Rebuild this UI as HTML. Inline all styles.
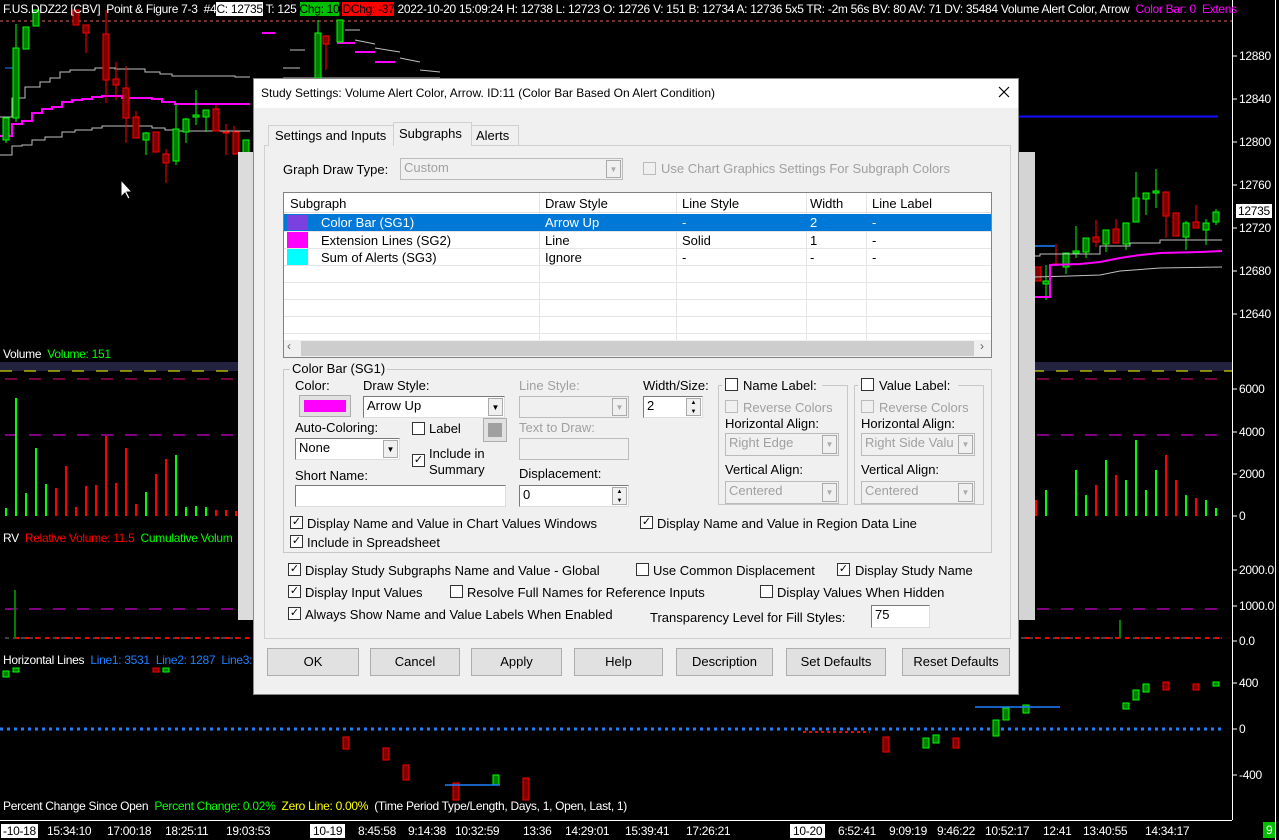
<!DOCTYPE html>
<html><head><meta charset="utf-8">
<style>
*{margin:0;padding:0;box-sizing:border-box}
body{width:1279px;height:840px;background:#000;overflow:hidden;position:relative;font-family:"Liberation Sans",sans-serif;}
.a{position:absolute;white-space:nowrap}
.ct{font-size:12px;letter-spacing:-0.3px;color:#fff}
.ax{font-size:12px;color:#fff;letter-spacing:-0.3px}
.d{font-size:13px;color:#000}
.dis{color:#a0a0a0}
.cb{position:absolute;width:13px;height:13px;border:1px solid #333;background:#fff;font-size:11px;line-height:11px;text-align:center}
.cb.g{border-color:#bbb;background:#f0f0f0}
.inp{position:absolute;background:#fff;border:1px solid #7a7a7a;border-right-color:#ddd;border-bottom-color:#ddd;font-size:13px;padding:1px 3px;line-height:16px}
.inp.g{background:#f0f0f0;color:#a0a0a0;border-color:#bbb}
.dd{position:absolute;right:1px;top:1px;bottom:1px;width:15px;background:#f0f0f0;border:1px solid #aaa;font-size:8px;text-align:center;line-height:17px;color:#000}
.btn{position:absolute;top:648px;height:28px;background:#e1e1e1;border:1px solid #adadad;font-size:13px;text-align:center;line-height:26px}
.grp{position:absolute;border:1px solid #c8c8c8}
</style></head><body>

<svg class="a" style="left:0;top:0" width="1279" height="840">
<line x1="0" y1="21" x2="1232" y2="21" stroke="#e06060" stroke-dasharray="3,3"/>
<line x1="1232.5" y1="0" x2="1232.5" y2="820" stroke="#fff"/>
<line x1="1275.5" y1="0" x2="1275.5" y2="840" stroke="#fff"/>
<line x1="0" y1="820.5" x2="1232" y2="820.5" stroke="#fff"/>
<g stroke="#fff">
<line x1="1233" y1="56" x2="1237" y2="56"/><line x1="1233" y1="99" x2="1237" y2="99"/><line x1="1233" y1="142" x2="1237" y2="142"/><line x1="1233" y1="185" x2="1237" y2="185"/><line x1="1233" y1="228" x2="1237" y2="228"/><line x1="1233" y1="271" x2="1237" y2="271"/><line x1="1233" y1="314" x2="1237" y2="314"/>
<line x1="1233" y1="389" x2="1237" y2="389"/><line x1="1233" y1="432" x2="1237" y2="432"/><line x1="1233" y1="474" x2="1237" y2="474"/><line x1="1233" y1="516" x2="1237" y2="516"/>
<line x1="1233" y1="570" x2="1237" y2="570"/><line x1="1233" y1="606" x2="1237" y2="606"/><line x1="1233" y1="641" x2="1237" y2="641"/>
<line x1="1233" y1="683" x2="1237" y2="683"/><line x1="1233" y1="729" x2="1237" y2="729"/><line x1="1233" y1="775" x2="1237" y2="775"/>
</g>
<line x1="1010" y1="116.5" x2="1218" y2="116.5" stroke="#1010ff" stroke-width="2"/>
<!-- left step lines -->
<polyline points="0,117 12,117 12,98 25,98 25,87 40,87 40,82 50,82 50,78 60,78 60,72 70,72 70,70 95,70 95,68 115,68 115,69 145,69 145,72 160,72 160,74 172,74 172,76 235,76 235,77 250,77" fill="none" stroke="#c0c0c0"/>
<polyline points="0,136 12,136 12,124 22,124 22,121 32,121 32,113 42,113 42,109 52,109 52,107 62,107 62,102 72,102 72,100 82,100 82,99 92,99 92,97 102,97 102,96 122,96 122,98 152,98 152,99 162,99 162,102 175,102 175,104 250,104" fill="none" stroke="#ff00ff" stroke-width="2"/>
<polyline points="0,155 12,155 12,146 22,146 22,145 32,145 32,140 45,140 45,137 62,137 62,132 75,132 75,130 92,130 92,128 102,128 102,126 152,126 152,128 165,128 165,130 175,130 175,131 250,131" fill="none" stroke="#c0c0c0"/>
<polyline points="0,20 1,18 4,19" fill="none" stroke="#000"/>
<line x1="5" y1="68" x2="15" y2="68" stroke="#1e80ff"/>
<!-- top middle lines -->
<g stroke="#c0c0c0"><line x1="283" y1="78" x2="440" y2="78"/><line x1="290" y1="50" x2="305" y2="50"/><line x1="283" y1="68" x2="300" y2="68"/><line x1="345" y1="30" x2="360" y2="30"/><line x1="355" y1="40" x2="375" y2="44"/><line x1="375" y1="48" x2="400" y2="52"/><line x1="400" y1="58" x2="420" y2="62"/><line x1="420" y1="70" x2="440" y2="72"/></g>
<g stroke="#ff00ff" stroke-width="2"><line x1="262" y1="33" x2="275" y2="33"/><line x1="337" y1="43" x2="355" y2="43"/><line x1="355" y1="52" x2="375" y2="52"/><line x1="375" y1="62" x2="395" y2="62"/></g>
<g stroke-width="1">
<g fill="#008000" stroke="#00ff00">
<line x1="6" y1="117" x2="6" y2="143"/><rect x="3" y="118" width="6" height="22"/>
<line x1="16" y1="24" x2="16" y2="122"/><rect x="13" y="48" width="6" height="70"/>
<rect x="23" y="27" width="6" height="22"/><rect x="33" y="10" width="6" height="16"/>
<line x1="146" y1="132" x2="146" y2="155"/><rect x="143" y="133" width="6" height="7"/>
<line x1="176" y1="104" x2="176" y2="165"/><rect x="173" y="129" width="6" height="32"/>
<line x1="186" y1="118" x2="186" y2="143"/><rect x="183" y="119" width="6" height="13"/>
<line x1="196" y1="90" x2="196" y2="125"/><rect x="193" y="115" width="6" height="2"/>
<line x1="206" y1="110" x2="206" y2="132"/><rect x="203" y="110" width="6" height="7"/>
<rect x="243" y="140" width="6" height="14"/>
<line x1="318" y1="20" x2="318" y2="78"/><rect x="315" y="33" width="6" height="45"/>
<rect x="337" y="20" width="6" height="22"/>
<line x1="1046" y1="265" x2="1046" y2="300"/><rect x="1043" y="281" width="6" height="3"/>
<line x1="1066" y1="253" x2="1066" y2="274"/><rect x="1063" y="253" width="6" height="14"/>
<line x1="1076" y1="226" x2="1076" y2="258"/><rect x="1073" y="251" width="6" height="2"/>
<line x1="1086" y1="238" x2="1086" y2="258"/><rect x="1083" y="238" width="6" height="14"/>
<line x1="1106" y1="230" x2="1106" y2="252"/><rect x="1103" y="230" width="6" height="14"/>
<line x1="1126" y1="223" x2="1126" y2="250"/><rect x="1123" y="223" width="6" height="21"/>
<line x1="1136" y1="172" x2="1136" y2="222"/><rect x="1133" y="198" width="6" height="24"/>
<line x1="1146" y1="193" x2="1146" y2="215"/><rect x="1143" y="193" width="6" height="6"/>
<line x1="1156" y1="169" x2="1156" y2="208"/><rect x="1153" y="191" width="6" height="2"/>
<line x1="1186" y1="221" x2="1186" y2="250"/><rect x="1183" y="223" width="6" height="14"/>
<line x1="1206" y1="219" x2="1206" y2="245"/><rect x="1203" y="223" width="6" height="7"/>
<line x1="1216" y1="209" x2="1216" y2="225"/><rect x="1213" y="212" width="6" height="10"/>
</g>
<g fill="#800000" stroke="#ff0000">
<rect x="73" y="10" width="6" height="15"/>
<line x1="86" y1="25" x2="86" y2="53"/><rect x="83" y="25" width="6" height="8"/>
<line x1="106" y1="10" x2="106" y2="103"/><rect x="103" y="34" width="6" height="46"/>
<line x1="116" y1="62" x2="116" y2="100"/><rect x="113" y="79" width="6" height="6"/>
<line x1="126" y1="66" x2="126" y2="143"/><rect x="123" y="88" width="6" height="30"/>
<line x1="136" y1="111" x2="136" y2="138"/><rect x="133" y="117" width="6" height="21"/>
<line x1="156" y1="132" x2="156" y2="152"/><rect x="153" y="132" width="6" height="20"/>
<line x1="166" y1="149" x2="166" y2="183"/><rect x="163" y="154" width="6" height="9"/>
<line x1="216" y1="105" x2="216" y2="131"/><rect x="213" y="109" width="6" height="22"/>
<line x1="226" y1="124" x2="226" y2="155"/><rect x="223" y="132" width="6" height="1"/>
<line x1="234" y1="126" x2="234" y2="155"/><rect x="233" y="132" width="6" height="22"/>
<line x1="326" y1="35" x2="326" y2="70"/><rect x="323" y="36" width="6" height="8"/>
<rect x="1035" y="267" width="6" height="14"/>
<line x1="1056" y1="244" x2="1056" y2="266"/><rect x="1053" y="264" width="6" height="1"/>
<line x1="1096" y1="220" x2="1096" y2="247"/><rect x="1093" y="237" width="6" height="5"/>
<line x1="1116" y1="219" x2="1116" y2="243"/><rect x="1113" y="229" width="6" height="14"/>
<line x1="1166" y1="192" x2="1166" y2="238"/><rect x="1163" y="192" width="6" height="24"/>
<rect x="1173" y="213" width="6" height="23"/>
<line x1="1196" y1="205" x2="1196" y2="228"/><rect x="1193" y="222" width="6" height="6"/>
</g>
</g>
<polyline points="1035,256 1040,256 1040,254 1100,254 1100,246 1130,246 1130,243 1160,243 1160,240 1222,240" fill="none" stroke="#c0c0c0"/>
<polyline points="1035,277 1070,276 1100,275 1120,271 1160,268 1222,267" fill="none" stroke="#c0c0c0"/>
<polyline points="1035,297 1050,297 1050,265 1080,264 1100,262 1120,258 1140,255 1160,253 1200,252 1222,251" fill="none" stroke="#ff00ff" stroke-width="2"/>
<line x1="1035" y1="246" x2="1055" y2="246" stroke="#1e80ff" stroke-width="1.5"/>
<rect x="0" y="362" width="1232" height="9" fill="#232340"/>
<line x1="0" y1="371" x2="1232" y2="371" stroke="#ffff00" stroke-dasharray="12,12"/>
<line x1="5" y1="379" x2="1222" y2="379" stroke="#e0107a" stroke-dasharray="12,12"/>
<line x1="5" y1="435" x2="1222" y2="435" stroke="#ff00ff" stroke-dasharray="12,12"/>
<g stroke-width="2">
<g stroke="#00ff00"><line x1="6" y1="508" x2="6" y2="516"/><line x1="16" y1="398" x2="16" y2="516"/><line x1="26" y1="493" x2="26" y2="516"/><line x1="36" y1="448" x2="36" y2="516"/><line x1="46" y1="484" x2="46" y2="516"/><line x1="146" y1="492" x2="146" y2="516"/><line x1="176" y1="455" x2="176" y2="516"/><line x1="186" y1="507" x2="186" y2="516"/><line x1="196" y1="506" x2="196" y2="516"/><line x1="206" y1="507" x2="206" y2="516"/>
<line x1="1046" y1="490" x2="1046" y2="516"/><line x1="1076" y1="470" x2="1076" y2="516"/><line x1="1086" y1="495" x2="1086" y2="516"/><line x1="1106" y1="460" x2="1106" y2="516"/><line x1="1126" y1="480" x2="1126" y2="516"/><line x1="1136" y1="440" x2="1136" y2="516"/><line x1="1146" y1="490" x2="1146" y2="516"/><line x1="1156" y1="470" x2="1156" y2="516"/><line x1="1186" y1="495" x2="1186" y2="516"/><line x1="1206" y1="500" x2="1206" y2="516"/><line x1="1216" y1="508" x2="1216" y2="516"/></g>
<g stroke="#ff0000"><line x1="56" y1="488" x2="56" y2="516"/><line x1="66" y1="466" x2="66" y2="516"/><line x1="76" y1="507" x2="76" y2="516"/><line x1="86" y1="486" x2="86" y2="516"/><line x1="96" y1="485" x2="96" y2="516"/><line x1="106" y1="436" x2="106" y2="516"/><line x1="116" y1="483" x2="116" y2="516"/><line x1="126" y1="448" x2="126" y2="516"/><line x1="136" y1="504" x2="136" y2="516"/><line x1="156" y1="474" x2="156" y2="516"/><line x1="166" y1="459" x2="166" y2="516"/><line x1="216" y1="510" x2="216" y2="516"/><line x1="226" y1="510" x2="226" y2="516"/><line x1="236" y1="511" x2="236" y2="516"/>
<line x1="1036" y1="500" x2="1036" y2="516"/><line x1="1096" y1="485" x2="1096" y2="516"/><line x1="1116" y1="475" x2="1116" y2="516"/><line x1="1166" y1="455" x2="1166" y2="516"/><line x1="1176" y1="480" x2="1176" y2="516"/><line x1="1196" y1="498" x2="1196" y2="516"/></g>
</g>
<line x1="5" y1="609" x2="1222" y2="609" stroke="#ff00ff" stroke-dasharray="12,12"/>
<line x1="5" y1="638" x2="1222" y2="638" stroke="#808080" stroke-dasharray="4,4"/>
<line x1="15" y1="590" x2="15" y2="638" stroke="#008000" stroke-width="2"/>
<line x1="15" y1="638" x2="1222" y2="638" stroke="#ff0000" stroke-dasharray="4,6" stroke-width="2"/>
<line x1="1120" y1="620" x2="1120" y2="638" stroke="#008000" stroke-width="2"/>
<line x1="0" y1="729" x2="1222" y2="729" stroke="#1e80ff" stroke-width="3" stroke-dasharray="3,4"/>
<g fill="#008000" stroke="#00ff00"><rect x="3" y="671" width="6" height="6"/><rect x="13" y="668" width="6" height="4"/><rect x="163" y="668" width="6" height="4"/>
<rect x="493" y="775" width="6" height="10"/><rect x="923" y="738" width="6" height="10"/><rect x="933" y="735" width="6" height="8"/><rect x="993" y="720" width="6" height="16"/><rect x="1003" y="708" width="6" height="12"/><rect x="1023" y="705" width="6" height="8"/><rect x="1123" y="703" width="6" height="6"/><rect x="1133" y="690" width="6" height="10"/><rect x="1143" y="684" width="6" height="8"/><rect x="1213" y="682" width="6" height="4"/></g>
<g fill="#800000" stroke="#ff0000"><rect x="153" y="668" width="6" height="4"/><rect x="343" y="737" width="6" height="12"/><rect x="383" y="748" width="6" height="12"/><rect x="403" y="765" width="6" height="15"/><rect x="453" y="783" width="6" height="17"/><rect x="523" y="778" width="6" height="22"/><rect x="883" y="737" width="6" height="15"/><rect x="953" y="738" width="6" height="10"/><rect x="1163" y="682" width="6" height="8"/><rect x="1193" y="684" width="6" height="6"/></g>
<line x1="975" y1="707" x2="1060" y2="707" stroke="#1e80ff" stroke-width="1.5"/>
<line x1="445" y1="785" x2="500" y2="785" stroke="#1e80ff" stroke-width="1.5"/>
<line x1="803" y1="732" x2="870" y2="732" stroke="#ff0000" stroke-dasharray="3,3" stroke-width="2"/>
<path d="M121,180 L121,197 L125,193 L128,199 L130,198 L127,192 L132,192 Z" fill="#fff" stroke="#000"/>
<rect x="238" y="152" width="797" height="468" fill="#e8e8e8"/>
<rect x="1019" y="152" width="16" height="468" fill="#d4d4d4"/>
<rect x="238" y="152" width="15" height="468" fill="#dcdcdc"/>
</svg>

<div class="a ct" style="left:3px;top:2px">F.US.DDZ22 [CBV]&nbsp; Point &amp; Figure 7-3&nbsp; #4<span style="background:#fff;color:#000">C: 12735</span> T: 125 <span style="background:#00c000;color:#000">Chg: 10</span> <span style="background:#ff0000;color:#000">DChg: -37</span> 2022-10-20 15:09:24 H: 12738 L: 12723 O: 12726 V: 151 B: 12734 A: 12736 5x5 TR: -2m 56s BV: 80 AV: 71 DV: 35484 Volume Alert Color, Arrow&nbsp; <span style="color:#ff00ff">Color Bar: 0&nbsp; Extens</span></div>

<div class="a ax" style="left:1239px;top:49px">12880</div>
<div class="a ax" style="left:1239px;top:92px">12840</div>
<div class="a ax" style="left:1239px;top:135px">12800</div>
<div class="a ax" style="left:1239px;top:178px">12760</div>
<div class="a ax" style="left:1236px;top:204px;background:#fff;color:#000;padding:0 2px">12735</div>
<div class="a ax" style="left:1239px;top:221px">12720</div>
<div class="a ax" style="left:1239px;top:264px">12680</div>
<div class="a ax" style="left:1239px;top:307px">12640</div>
<div class="a ax" style="left:1239px;top:382px">6000</div>
<div class="a ax" style="left:1239px;top:425px">4000</div>
<div class="a ax" style="left:1239px;top:467px">2000</div>
<div class="a ax" style="left:1239px;top:509px">0</div>
<div class="a ax" style="left:1239px;top:563px">2000.0</div>
<div class="a ax" style="left:1239px;top:599px">1000.0</div>
<div class="a ax" style="left:1239px;top:634px">0.0</div>
<div class="a ax" style="left:1239px;top:676px">400</div>
<div class="a ax" style="left:1239px;top:722px">0</div>
<div class="a ax" style="left:1239px;top:768px">-400</div>

<div class="a ct" style="left:3px;top:347px">Volume&nbsp; <span style="color:#00ff00">Volume: 151</span></div>
<div class="a ct" style="left:3px;top:531px">RV&nbsp; <span style="color:#ff0000">Relative Volume: 11.5</span>&nbsp; <span style="color:#00ff00">Cumulative Volum</span></div>
<div class="a ct" style="left:3px;top:653px">Horizontal Lines&nbsp; <span style="color:#1e80ff">Line1: 3531&nbsp; Line2: 1287&nbsp; Line3:</span></div>
<div class="a ct" style="left:3px;top:799px">Percent Change Since Open&nbsp; <span style="color:#00ff00">Percent Change: 0.02%</span>&nbsp; <span style="color:#ffff00">Zero Line: 0.00%</span>&nbsp; (Time Period Type/Length, Days, 1, Open, Last, 1)</div>

<div class="a ct" style="top:824px;left:1px;background:#fff;color:#000;padding:0 2px">-10-18</div>
<div class="a ct" style="top:824px;left:47px">15:34:10</div>
<div class="a ct" style="top:824px;left:107px">17:00:18</div>
<div class="a ct" style="top:824px;left:165px">18:25:11</div>
<div class="a ct" style="top:824px;left:226px">19:03:53</div>
<div class="a ct" style="top:824px;left:310px;background:#fff;color:#000;padding:0 3px">10-19</div>
<div class="a ct" style="top:824px;left:358px">8:45:58</div>
<div class="a ct" style="top:824px;left:408px">9:14:38</div>
<div class="a ct" style="top:824px;left:455px">10:32:59</div>
<div class="a ct" style="top:824px;left:523px">13:36</div>
<div class="a ct" style="top:824px;left:565px">14:29:01</div>
<div class="a ct" style="top:824px;left:625px">15:39:41</div>
<div class="a ct" style="top:824px;left:686px">17:26:21</div>
<div class="a ct" style="top:824px;left:790px;background:#fff;color:#000;padding:0 3px">10-20</div>
<div class="a ct" style="top:824px;left:838px">6:52:41</div>
<div class="a ct" style="top:824px;left:889px">9:09:19</div>
<div class="a ct" style="top:824px;left:937px">9:46:22</div>
<div class="a ct" style="top:824px;left:985px">10:52:17</div>
<div class="a ct" style="top:824px;left:1043px">12:41</div>
<div class="a ct" style="top:824px;left:1083px">13:40:55</div>
<div class="a ct" style="top:824px;left:1145px">14:34:17</div>
<div class="a ct" style="top:822px;left:1263px;background:#00c000;color:#fff;padding:1px 3px">9</div>

<!-- DIALOG -->
<div class="a" style="left:253px;top:78px;width:766px;height:617px;background:#f0f0f0;border:1px solid #888"></div>
<div class="a" style="left:254px;top:79px;width:764px;height:29px;background:#fff"></div>
<div class="a d" style="left:261px;top:86px;font-size:12px">Study Settings: Volume Alert Color, Arrow. ID:11 (Color Bar Based On Alert Condition)</div>
<svg class="a" style="left:998px;top:86px" width="12" height="12"><path d="M1,1 L11,11 M11,1 L1,11" stroke="#000" stroke-width="1.2"/></svg>

<div class="a" style="left:264px;top:145px;width:747px;height:494px;border:1px solid #d0d0d0;background:#f0f0f0"></div>
<div class="a d" style="left:268px;top:125px;width:126px;height:21px;border:1px solid #d0d0d0;border-bottom:none;background:#f0f0f0;padding:2px 0 0 6px">Settings and Inputs</div>
<div class="a d" style="left:393px;top:122px;width:79px;height:24px;border:1px solid #d0d0d0;border-bottom:none;background:#f0f0f0;padding:3px 0 0 5px">Subgraphs</div>
<div class="a d" style="left:472px;top:125px;width:47px;height:21px;border:1px solid #d0d0d0;border-left:none;border-bottom:none;padding:2px 0 0 4px">Alerts</div>
<div class="a" style="left:394px;top:144px;width:77px;height:3px;background:#f0f0f0"></div>

<div class="a d" style="left:283px;top:162px">Graph Draw Type:</div>
<div class="inp g" style="left:400px;top:158px;width:223px;height:22px">Custom<div class="dd" style="color:#aaa">▼</div></div>
<div class="cb g" style="left:643px;top:162px"></div>
<div class="a d dis" style="left:661px;top:161px">Use Chart Graphics Settings For Subgraph Colors</div>

<div class="a" style="left:283px;top:192px;width:709px;height:166px;background:#fff;border:1px solid #828282"></div>
<div class="a" style="left:284px;top:193px;width:707px;height:20px;background:#fff;border-bottom:1px solid #e0e0e0"></div>
<div class="a d" style="left:290px;top:196px">Subgraph</div>
<div class="a d" style="left:545px;top:196px">Draw Style</div>
<div class="a d" style="left:682px;top:196px">Line Style</div>
<div class="a d" style="left:810px;top:196px">Width</div>
<div class="a d" style="left:872px;top:196px">Line Label</div>
<svg class="a" style="left:284px;top:193px" width="707" height="147">
<g stroke="#e5e5e5"><line x1="255.5" y1="0" x2="255.5" y2="147"/><line x1="392.5" y1="0" x2="392.5" y2="147"/><line x1="522.5" y1="0" x2="522.5" y2="147"/><line x1="582.5" y1="0" x2="582.5" y2="147"/>
<line x1="0" y1="38.5" x2="707" y2="38.5"/><line x1="0" y1="55.5" x2="707" y2="55.5"/><line x1="0" y1="72.5" x2="707" y2="72.5"/><line x1="0" y1="89.5" x2="707" y2="89.5"/><line x1="0" y1="106.5" x2="707" y2="106.5"/><line x1="0" y1="123.5" x2="707" y2="123.5"/><line x1="0" y1="140.5" x2="707" y2="140.5"/></g>
<rect x="0" y="21" width="707" height="17" fill="#0078d7"/>
<rect x="3" y="22" width="21" height="15" fill="#7a40e0"/>
<rect x="3" y="39" width="21" height="16" fill="#ff00ff"/>
<rect x="3" y="56" width="21" height="16" fill="#00ffff"/>
</svg>
<div class="a d" style="left:321px;top:215px;color:#fff">Color Bar (SG1)</div>
<div class="a d" style="left:545px;top:215px;color:#fff">Arrow Up</div>
<div class="a d" style="left:682px;top:215px;color:#fff">-</div>
<div class="a d" style="left:810px;top:215px;color:#fff">2</div>
<div class="a d" style="left:872px;top:215px;color:#fff">-</div>
<div class="a d" style="left:321px;top:233px">Extension Lines (SG2)</div>
<div class="a d" style="left:545px;top:233px">Line</div>
<div class="a d" style="left:682px;top:233px">Solid</div>
<div class="a d" style="left:810px;top:233px">1</div>
<div class="a d" style="left:872px;top:233px">-</div>
<div class="a d" style="left:321px;top:250px">Sum of Alerts (SG3)</div>
<div class="a d" style="left:545px;top:250px">Ignore</div>
<div class="a d" style="left:682px;top:250px">-</div>
<div class="a d" style="left:810px;top:250px">-</div>
<div class="a d" style="left:872px;top:250px">-</div>
<div class="a" style="left:284px;top:340px;width:707px;height:17px;background:#f0f0f0"></div>
<div class="a" style="left:301px;top:341px;width:673px;height:15px;background:#cdcdcd"></div>
<div class="a" style="left:287px;top:339px;font-size:12px;color:#606060">‹</div>
<div class="a" style="left:980px;top:339px;font-size:12px;color:#606060">›</div>

<div class="grp" style="left:283px;top:369px;width:709px;height:184px"></div>
<div class="a d" style="left:290px;top:361px;background:#f0f0f0;padding:0 2px">Color Bar (SG1)</div>
<div class="a d" style="left:295px;top:378px">Color:</div>
<div class="a" style="left:299px;top:395px;width:52px;height:22px;background:#e1e1e1;border:1px solid #adadad"><div style="margin:4px 4px;height:12px;background:#ff00ff"></div></div>
<div class="a d" style="left:363px;top:378px">Draw Style:</div>
<div class="inp" style="left:363px;top:396px;width:142px;height:22px">Arrow Up<div class="dd">▼</div></div>
<div class="a d dis" style="left:519px;top:378px">Line Style:</div>
<div class="inp g" style="left:519px;top:396px;width:110px;height:22px"><div class="dd" style="color:#aaa">▼</div></div>
<div class="a d" style="left:643px;top:378px">Width/Size:</div>
<div class="inp" style="left:643px;top:396px;width:60px;height:22px">2<div class="dd" style="font-size:6px;line-height:9px">▲<br>▼</div></div>
<div class="a d" style="left:295px;top:420px">Auto-Coloring:</div>
<div class="inp" style="left:295px;top:438px;width:105px;height:22px">None<div class="dd">▼</div></div>
<div class="cb" style="left:412px;top:422px"></div>
<div class="a d" style="left:429px;top:421px">Label</div>
<div class="a" style="left:483px;top:418px;width:24px;height:24px;background:#e1e1e1;border:1px solid #adadad"><div style="margin:4px;height:14px;background:#a0a0a0"></div></div>
<div class="a d dis" style="left:519px;top:420px">Text to Draw:</div>
<div class="inp g" style="left:519px;top:438px;width:110px;height:22px"></div>
<div class="cb" style="left:412px;top:454px">✓</div>
<div class="a d" style="left:429px;top:446px;line-height:16px">Include in<br>Summary</div>
<div class="a d" style="left:295px;top:468px">Short Name:</div>
<div class="inp" style="left:295px;top:485px;width:211px;height:22px"></div>
<div class="a d" style="left:519px;top:466px">Displacement:</div>
<div class="inp" style="left:519px;top:485px;width:110px;height:22px">0<div class="dd" style="font-size:6px;line-height:9px">▲<br>▼</div></div>

<div class="grp" style="left:718px;top:385px;width:130px;height:120px"></div>
<div class="a" style="left:722px;top:378px;background:#f0f0f0;width:100px;height:14px"></div>
<div class="cb" style="left:725px;top:378px"></div>
<div class="a d" style="left:743px;top:378px">Name Label:</div>
<div class="cb g" style="left:725px;top:400px"></div>
<div class="a d dis" style="left:743px;top:400px">Reverse Colors</div>
<div class="a d" style="left:725px;top:416px">Horizontal Align:</div>
<div class="inp g" style="left:725px;top:433px;width:114px;height:23px">Right Edge<div class="dd" style="color:#aaa">▼</div></div>
<div class="a d" style="left:725px;top:462px">Vertical Align:</div>
<div class="inp g" style="left:725px;top:481px;width:114px;height:23px">Centered<div class="dd" style="color:#aaa">▼</div></div>

<div class="grp" style="left:854px;top:385px;width:130px;height:120px"></div>
<div class="a" style="left:858px;top:378px;background:#f0f0f0;width:100px;height:14px"></div>
<div class="cb" style="left:861px;top:378px"></div>
<div class="a d" style="left:879px;top:378px">Value Label:</div>
<div class="cb g" style="left:861px;top:400px"></div>
<div class="a d dis" style="left:879px;top:400px">Reverse Colors</div>
<div class="a d" style="left:861px;top:416px">Horizontal Align:</div>
<div class="inp g" style="left:861px;top:433px;width:114px;height:23px">Right Side Valu<div class="dd" style="color:#aaa">▼</div></div>
<div class="a d" style="left:861px;top:462px">Vertical Align:</div>
<div class="inp g" style="left:861px;top:481px;width:114px;height:23px">Centered<div class="dd" style="color:#aaa">▼</div></div>

<div class="cb" style="left:290px;top:516px">✓</div>
<div class="a d" style="left:307px;top:516px">Display Name and Value in Chart Values Windows</div>
<div class="cb" style="left:640px;top:516px">✓</div>
<div class="a d" style="left:657px;top:516px">Display Name and Value in Region Data Line</div>
<div class="cb" style="left:290px;top:535px">✓</div>
<div class="a d" style="left:307px;top:535px">Include in Spreadsheet</div>

<div class="cb" style="left:288px;top:563px">✓</div>
<div class="a d" style="left:305px;top:563px">Display Study Subgraphs Name and Value - Global</div>
<div class="cb" style="left:636px;top:563px"></div>
<div class="a d" style="left:653px;top:563px">Use Common Displacement</div>
<div class="cb" style="left:837px;top:563px">✓</div>
<div class="a d" style="left:855px;top:563px">Display Study Name</div>
<div class="cb" style="left:288px;top:585px">✓</div>
<div class="a d" style="left:305px;top:585px">Display Input Values</div>
<div class="cb" style="left:450px;top:585px"></div>
<div class="a d" style="left:467px;top:585px">Resolve Full Names for Reference Inputs</div>
<div class="cb" style="left:760px;top:585px"></div>
<div class="a d" style="left:777px;top:585px">Display Values When Hidden</div>
<div class="cb" style="left:288px;top:607px">✓</div>
<div class="a d" style="left:305px;top:607px">Always Show Name and Value Labels When Enabled</div>
<div class="a d" style="left:650px;top:610px">Transparency Level for Fill Styles:</div>
<div class="inp" style="left:871px;top:605px;width:59px;height:23px">75</div>

<div class="btn" style="left:267px;width:92px">OK</div>
<div class="btn" style="left:370px;width:90px">Cancel</div>
<div class="btn" style="left:471px;width:91px">Apply</div>
<div class="btn" style="left:574px;width:89px">Help</div>
<div class="btn" style="left:676px;width:97px">Description</div>
<div class="btn" style="left:786px;width:100px">Set Defaults</div>
<div class="btn" style="left:902px;width:108px">Reset Defaults</div>
</body></html>
